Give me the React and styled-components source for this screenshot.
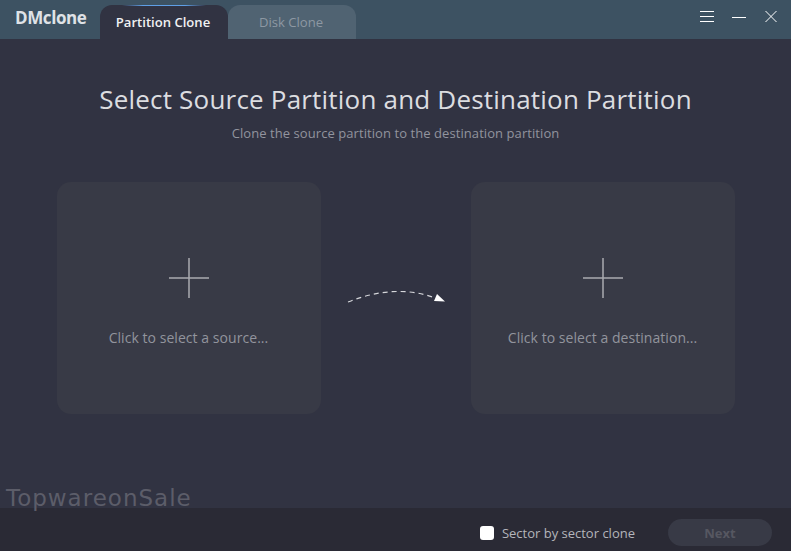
import React, { useState } from 'react';
import styled, { createGlobalStyle } from 'styled-components';

const GlobalStyle = createGlobalStyle`
  html, body {
    margin: 0;
    padding: 0;
    background: #313342;
    overflow: hidden;
  }
  * {
    box-sizing: border-box;
  }
`;

const Window = styled.div`
  position: relative;
  width: 791px;
  height: 551px;
  display: flex;
  flex-direction: column;
  background: #313342;
  font-family: 'Open Sans', 'Noto Sans', sans-serif;
`;

const TitleBar = styled.div`
  height: 39px;
  flex: none;
  display: flex;
  align-items: flex-end;
  background: #3d5262;
`;

const Logo = styled.div`
  width: 100px;
  height: 39px;
  padding: 8px 0 0 15px;
  font-size: 17px;
  line-height: 20px;
  font-weight: 700;
  letter-spacing: -0.4px;
  color: #dfe2e6;
`;

const Tab = styled.button`
  position: relative;
  width: 128px;
  height: 34px;
  padding: 0 2px 0 0;
  border: none;
  border-radius: 12px 12px 0 0;
  font-family: inherit;
  font-size: 13.1px;
  font-weight: ${(props) => (props.$active ? 600 : 400)};
  color: ${(props) => (props.$active ? '#f0f1f3' : '#8d98a3')};
  background: ${(props) => (props.$active ? '#313342' : '#506372')};
  cursor: pointer;

  &::before {
    content: '';
    display: ${(props) => (props.$active ? 'block' : 'none')};
    position: absolute;
    top: 0;
    left: 22px;
    right: 22px;
    height: 1px;
    background: linear-gradient(90deg, transparent, #5f9fe6 25%, #5f9fe6 75%, transparent);
  }
`;

const WindowControls = styled.div`
  margin-left: auto;
  height: 39px;
  display: flex;
  align-items: flex-start;
  padding: 9px 13px 0 0;
  gap: 18px;
`;

const ControlIcon = styled.svg`
  width: 14px;
  height: 14px;
  display: block;
  stroke: #ffffff;
  stroke-width: 1;
  fill: none;
`;

const Main = styled.main`
  flex: 1;
  display: flex;
  flex-direction: column;
  align-items: center;
`;

const Title = styled.h1`
  margin: 42px 0 0;
  font-size: 26px;
  line-height: 36px;
  font-weight: 400;
  letter-spacing: 0.2px;
  color: #dcdde0;
`;

const Subtitle = styled.p`
  margin: 7px 0 0;
  font-size: 13px;
  line-height: 18px;
  letter-spacing: 0.07px;
  color: #92949e;
`;

const CardRow = styled.div`
  margin-top: 40px;
  width: 678px;
  display: flex;
  justify-content: space-between;
  align-items: center;
`;

const Card = styled.div`
  width: 264px;
  height: 232px;
  padding-top: 76px;
  display: flex;
  flex-direction: column;
  align-items: center;
  border-radius: 14px;
  background: #383a46;
  cursor: pointer;
`;

const PlusIcon = styled.svg`
  width: 40px;
  height: 40px;
  display: block;
  stroke: #a9aab0;
  stroke-width: 1.5;
`;

const CardLabel = styled.div`
  margin-top: 30px;
  font-size: 14px;
  line-height: 20px;
  letter-spacing: 0.05px;
  color: #92949d;
`;

const ArrowIcon = styled.svg`
  width: 100px;
  height: 20px;
  display: block;
  margin: -1px 0 0 2px;
`;

const Footer = styled.footer`
  height: 43px;
  flex: none;
  display: flex;
  align-items: center;
  padding: 6px 19px 0 0;
  justify-content: flex-end;
  background: #2a2a35;
`;

const CheckLabel = styled.label`
  display: flex;
  align-items: center;
  gap: 8px;
  margin-right: 33px;
  font-size: 13px;
  color: #b4b5bb;
  cursor: pointer;
`;

const CheckBox = styled.span`
  width: 14px;
  height: 14px;
  border-radius: 3px;
  background: ${(props) => (props.$checked ? '#5f9fe6' : '#ffffff')};
`;

const NextButton = styled.button`
  width: 104px;
  height: 27px;
  border: none;
  border-radius: 14px;
  font-family: inherit;
  font-size: 13px;
  font-weight: 700;
  color: #565761;
  background: #383a46;
`;

const Watermark = styled.div`
  position: absolute;
  left: 6px;
  top: 484px;
  font-family: 'DejaVu Sans', sans-serif;
  font-size: 23px;
  line-height: 28px;
  font-weight: 400;
  letter-spacing: 1px;
  color: #5c5d69;
`;

const App = () => {
  const [activeTab, setActiveTab] = useState('partition');
  const [sectorClone, setSectorClone] = useState(false);

  return (
    <Window>
      <GlobalStyle />
      <TitleBar>
        <Logo>DMclone</Logo>
        <Tab $active={activeTab === 'partition'} onClick={() => setActiveTab('partition')}>
          Partition Clone
        </Tab>
        <Tab $active={activeTab === 'disk'} onClick={() => setActiveTab('disk')}>
          Disk Clone
        </Tab>
        <WindowControls>
          <ControlIcon viewBox="0 0 14 14">
            <path d="M0 2.5h14M0 7.5h14M0 12.5h14" />
          </ControlIcon>
          <ControlIcon viewBox="0 0 14 14">
            <path d="M0 8.5h14" />
          </ControlIcon>
          <ControlIcon viewBox="0 0 14 14">
            <path d="M1.5 2l11 11M12.5 2l-11 11" />
          </ControlIcon>
        </WindowControls>
      </TitleBar>

      <Main>
        <Title>Select Source Partition and Destination Partition</Title>
        <Subtitle>Clone the source partition to the destination partition</Subtitle>
        <CardRow>
          <Card>
            <PlusIcon viewBox="0 0 40 40">
              <path d="M20 0v40M0 20h40" />
            </PlusIcon>
            <CardLabel>Click to select a source...</CardLabel>
          </Card>
          <ArrowIcon viewBox="0 0 100 20">
            <path d="M1 14C28 3 60 -1 88 10" fill="none" stroke="#d5d6da" strokeWidth="1.2" strokeDasharray="5 4" />
            <path d="M90 6l8 7.5-11-.5z" fill="#ffffff" />
          </ArrowIcon>
          <Card>
            <PlusIcon viewBox="0 0 40 40">
              <path d="M20 0v40M0 20h40" />
            </PlusIcon>
            <CardLabel>Click to select a destination...</CardLabel>
          </Card>
        </CardRow>
      </Main>

      <Footer>
        <CheckLabel onClick={() => setSectorClone(!sectorClone)}>
          <CheckBox $checked={sectorClone} />
          Sector by sector clone
        </CheckLabel>
        <NextButton disabled>Next</NextButton>
      </Footer>

      <Watermark>TopwareonSale</Watermark>
    </Window>
  );
};

export default App;
